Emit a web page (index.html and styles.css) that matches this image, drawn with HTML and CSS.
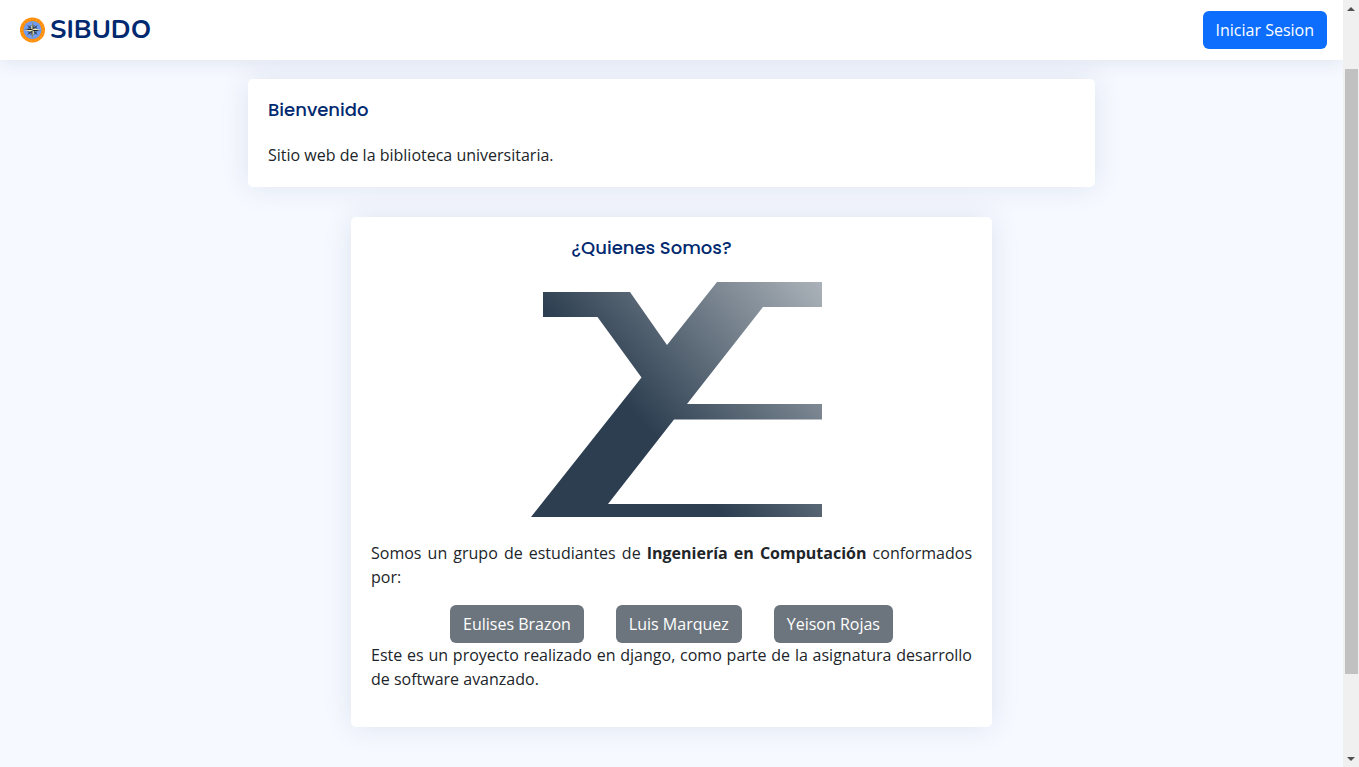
FILE: index.html
```html
<!DOCTYPE html>
<html lang="es">
<head>
<meta charset="utf-8">
<meta name="viewport" content="width=device-width, initial-scale=1">
<title>SIBUDO</title>
<link rel="stylesheet" href="styles.css">
</head>
<body>
<div class="page">
  <header class="header">
    <a class="brand" href="#">
      <svg class="brand-icon" viewBox="0 0 26 26" aria-hidden="true">
        <circle cx="13" cy="13" r="13" fill="#ff8c0a"/>
        <circle cx="13" cy="13" r="11.2" fill="none" stroke="#ffa51f" stroke-width="1.6" stroke-dasharray="1.5 2"/>
        <circle cx="13" cy="13" r="9.4" fill="#6f9cf0"/>
        <circle cx="13" cy="13" r="4.8" fill="none" stroke="#4a6085" stroke-width="1"/>
        <path d="M7.5 7.5 13 11.2 18.5 7.5 14.8 13 18.5 18.5 13 14.8 7.5 18.5 11.2 13z" fill="#344155"/>
        <path d="M13 4 14.5 11.5 22 13 14.5 14.5 13 22 11.5 14.5 4 13 11.5 11.5z" fill="#f2edb5"/>
        <path d="M13 4v9l1.5-1.5zM22 13h-9l1.5 1.5zM13 22v-9l-1.5 1.5zM4 13h9l-1.5-1.5z" fill="#17202c"/>
      </svg>
      <span>SIBUDO</span>
    </a>
    <button class="btn btn-primary" type="button">Iniciar Sesion</button>
  </header>
  <main class="main">
    <section class="card card-welcome">
      <h5 class="card-title">Bienvenido</h5>
      <p class="text">Sitio web de la biblioteca universitaria.</p>
    </section>
    <section class="card card-about">
      <h5 class="card-title card-title-center">¿Quienes Somos?</h5>
      <svg class="logo" viewBox="521 281 301 244" role="img" aria-label="Logo">
        <defs>
          <linearGradient id="steel" gradientUnits="userSpaceOnUse" x1="640" y1="420" x2="811" y2="270">
            <stop offset="0" stop-color="#2c3e50"/>
            <stop offset="1" stop-color="#abb2b9"/>
          </linearGradient>
        </defs>
        <path fill="url(#steel)" d="M543 292H630L667 345 717 282H822V307H763L687 404H822V419.500H674L608 504H822V517H531L641.500 377.500 597.500 317H543z"/>
      </svg>
      <p class="text text-spaced">Somos un grupo de estudiantes de <strong>Ingeniería en Computación</strong> conformados por:</p>
      <div class="members">
        <button class="btn btn-secondary" type="button">Eulises Brazon</button>
        <button class="btn btn-secondary" type="button">Luis Marquez</button>
        <button class="btn btn-secondary" type="button">Yeison Rojas</button>
      </div>
      <p class="text text-spaced">Este es un proyecto realizado en django, como parte de la asignatura desarrollo de software avanzado.</p>
    </section>
  </main>
</div>
<div class="scrollbar" aria-hidden="true">
  <svg class="scroll-arrow" viewBox="0 0 16 17"><path d="M4 11h8L8 7z" fill="#505050"/></svg>
  <div class="scroll-before"></div>
  <div class="scroll-thumb"></div>
  <div class="scroll-after"></div>
  <svg class="scroll-arrow" viewBox="0 0 16 17"><path d="M4 7h8l-4 4z" fill="#505050"/></svg>
</div>
</body>
</html>
```
FILE: styles.css
```css
* {
  box-sizing: border-box;
}

body {
  margin: 0;
  display: flex;
  min-height: 100vh;
  background: #f6f9ff;
  color: #212529;
  font-family: "Open Sans", sans-serif;
  font-size: 16px;
  line-height: 24px;
}

.page {
  flex: 1;
  min-width: 0;
}

.header {
  position: relative;
  z-index: 1;
  display: flex;
  align-items: center;
  justify-content: space-between;
  height: 60px;
  padding: 0 16px 0 20px;
  background: #fff;
  box-shadow: 0 2px 20px rgba(1, 41, 112, 0.1);
}

.brand {
  display: flex;
  align-items: center;
  gap: 5px;
  color: #012970;
  font-family: Nunito, Lato, sans-serif;
  font-size: 26px;
  font-weight: 700;
  line-height: 32px;
  text-decoration: none;
}

.brand-icon {
  width: 25px;
  height: 26px;
}

.btn {
  padding: 6px 12px;
  border: 1px solid transparent;
  border-radius: 6px;
  color: #fff;
  font: inherit;
  cursor: pointer;
}

.btn-primary {
  background: #0d6efd;
}

.btn-secondary {
  background: #6c757d;
}

.main {
  display: flex;
  flex-direction: column;
  align-items: center;
  gap: 30px;
  padding: 19px 12px 40px;
}

.card {
  width: 100%;
  padding: 20px;
  border-radius: 5px;
  background: #fff;
  box-shadow: 0 0 30px rgba(1, 41, 112, 0.1);
}

.card-welcome {
  max-width: 847px;
}

.card-about {
  max-width: 641px;
}

.card-title {
  margin: 0;
  padding-bottom: 22px;
  color: #012970;
  font-family: Poppins, Inter, sans-serif;
  font-size: 18px;
  font-weight: 500;
  line-height: 22px;
}

.card-title-center {
  padding-right: 40px;
  text-align: center;
}

.logo {
  display: block;
  width: 301px;
  max-width: 100%;
  margin: 0 auto 16px;
}

.text {
  margin: 0;
  text-align: justify;
}

.text strong {
  font-weight: 700;
}

.text-spaced {
  margin-bottom: 16px;
}

.members {
  display: flex;
  flex-wrap: wrap;
  justify-content: center;
  gap: 0 32px;
}

.scrollbar {
  position: sticky;
  top: 0;
  z-index: 2;
  display: flex;
  flex-direction: column;
  width: 16px;
  height: 100vh;
  background: #f0f0f0;
}

.scroll-arrow {
  width: 16px;
  height: 17px;
}

.scroll-before {
  flex: 52;
}

.scroll-thumb {
  flex: 605;
  margin: 0 1px 0 2px;
  background: #c1c1c1;
}

.scroll-after {
  flex: 76;
}
```
